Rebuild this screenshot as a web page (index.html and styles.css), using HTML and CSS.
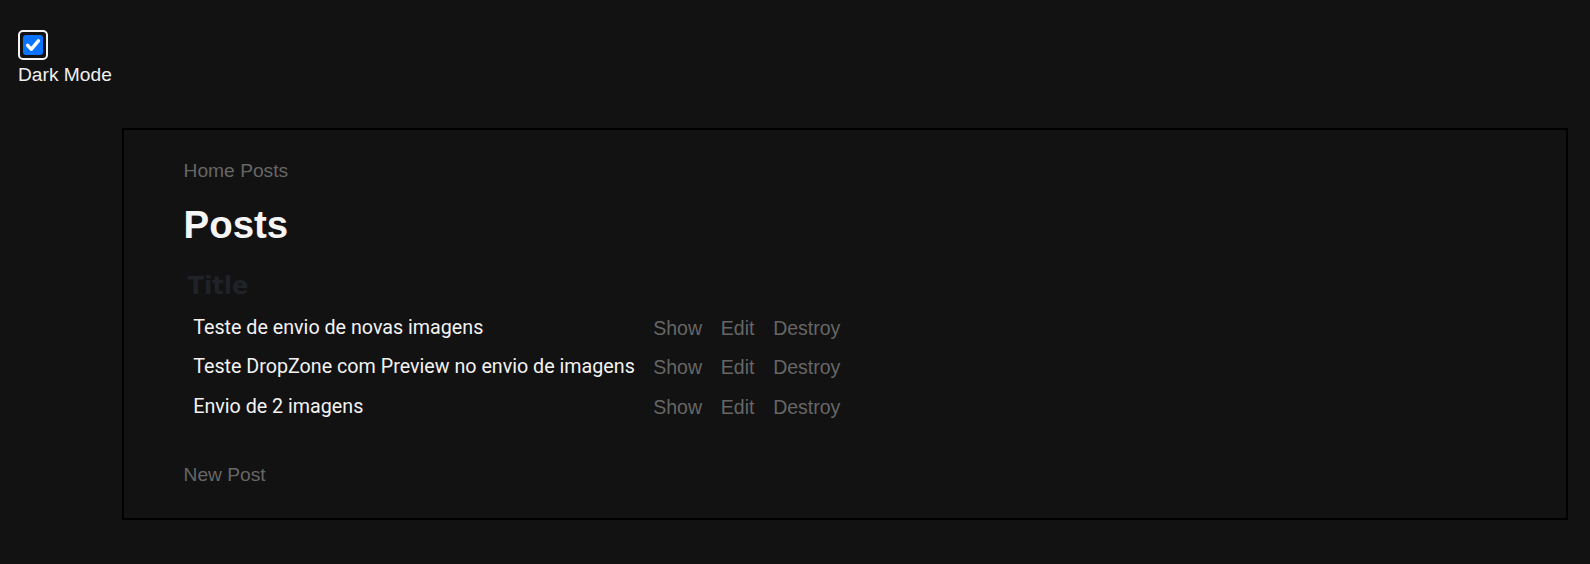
FILE: index.html
```html
<!DOCTYPE html>
<html lang="pt">
<head>
<meta charset="utf-8">
<title>Posts</title>
<link rel="stylesheet" href="styles.css">
</head>
<body>
<div class="toggle">
  <span class="check-ring" role="checkbox" aria-checked="true">
    <span class="check-box">
      <svg viewBox="0 0 20 20" width="20" height="20" aria-hidden="true"><path d="M4.6 10.4 L8.4 14.2 L15.4 5.8" fill="none" stroke="#fff" stroke-width="3.4" stroke-linecap="round" stroke-linejoin="round"/></svg>
    </span>
  </span>
  <span class="toggle-label">Dark Mode</span>
</div>
<main class="panel">
  <nav class="crumbs"><a href="#">Home</a> <a href="#">Posts</a></nav>
  <h1 class="title">Posts</h1>
  <table class="posts">
    <thead>
      <tr><th>Title</th></tr>
    </thead>
    <tbody>
      <tr><td class="name">Teste de envio de novas imagens</td><td><a href="#">Show</a></td><td><a href="#">Edit</a></td><td><a href="#">Destroy</a></td></tr>
      <tr><td class="name">Teste DropZone com Preview no envio de imagens</td><td><a href="#">Show</a></td><td><a href="#">Edit</a></td><td><a href="#">Destroy</a></td></tr>
      <tr><td class="name">Envio de 2 imagens</td><td><a href="#">Show</a></td><td><a href="#">Edit</a></td><td><a href="#">Destroy</a></td></tr>
    </tbody>
  </table>
  <a class="new-link" href="#">New Post</a>
</main>
</body>
</html>
```
FILE: styles.css
```css
html, body {
  margin: 0;
  padding: 0;
  background: #121212;
}
body {
  font-family: "Liberation Sans", Arial, sans-serif;
  font-size: 19.2px;
  line-height: 22px;
  color: #f2f2f2;
}
a {
  color: #666666;
  text-decoration: none;
}
.toggle {
  display: flex;
  flex-direction: column;
  align-items: flex-start;
  padding: 30px 0 0 18px;
}
.check-ring {
  box-sizing: border-box;
  width: 30px;
  height: 30px;
  border: 2px solid #f4f4f4;
  border-radius: 5px;
  display: flex;
  align-items: center;
  justify-content: center;
}
.check-box {
  width: 20px;
  height: 20px;
  background: #0b74ff;
  border-radius: 3px;
  display: flex;
}
.toggle-label {
  margin-top: 4px;
  color: #f0f0f0;
}
.panel {
  display: flex;
  flex-direction: column;
  align-items: flex-start;
  box-sizing: border-box;
  width: 1446px;
  height: 392px;
  margin: 42px 0 0 122px;
  border: 2px solid #000;
  background: #121212;
  padding: 30px 59.6px 0;
}
.crumbs {
  line-height: 22px;
}
.title {
  margin: 21px 0 16px;
  font-size: 38.4px;
  line-height: 44px;
  font-weight: bold;
  color: #f5f5f5;
}
.posts {
  border-collapse: separate;
  border-spacing: 2px;
  margin: 0;
}
.posts th {
  font-family: "DejaVu Sans", sans-serif;
  font-size: 24px;
  line-height: 28px;
  font-weight: bold;
  color: #1f2228;
  text-align: left;
  padding: 7px 2px;
}
.posts td {
  padding: 7.75px 8.4px;
  font-size: 19.5px;
  line-height: 22px;
  white-space: nowrap;
}
.posts td.name {
  font-family: Roboto, "Liberation Sans", sans-serif;
  font-size: 19.7px;
  padding-left: 7.6px;
  padding-right: 8px;
}
.new-link {
  margin-top: 36px;
}
```
